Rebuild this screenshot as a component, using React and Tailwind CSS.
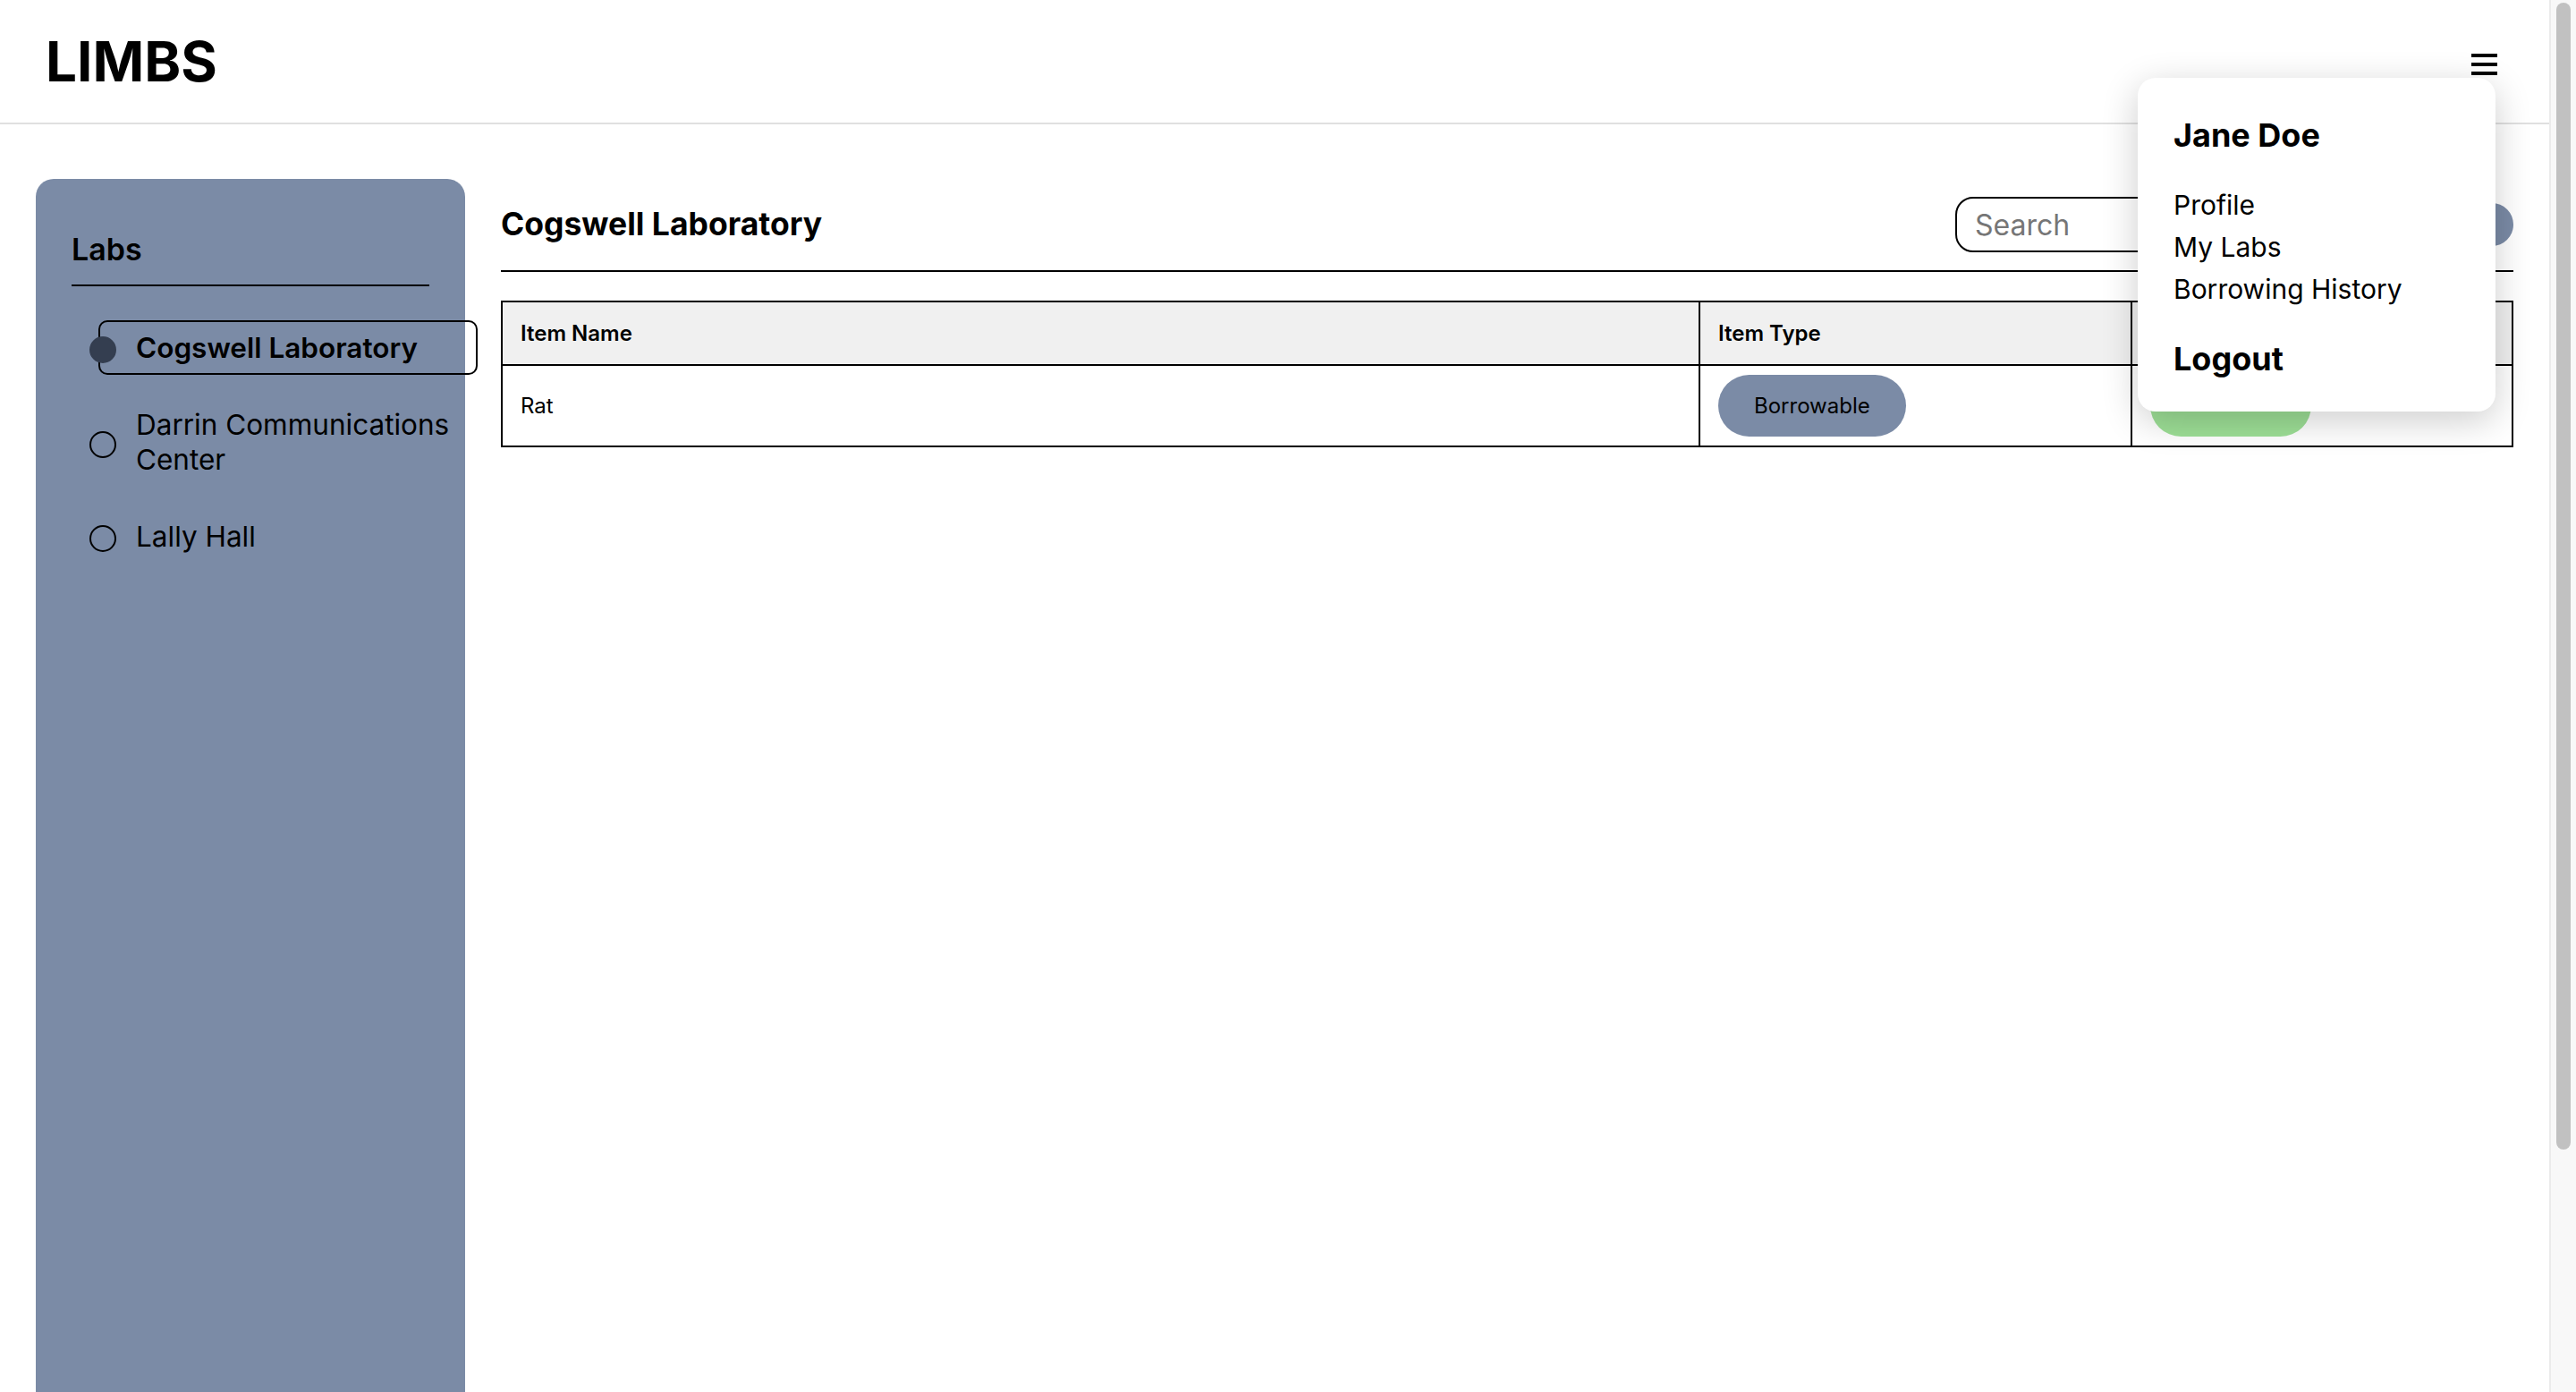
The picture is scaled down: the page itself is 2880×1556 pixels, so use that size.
import React from 'react';

// Labs shown in the sidebar list
const labs = [
  { id: 'cogswell', name: 'Cogswell Laboratory' },
  { id: 'darrin', name: 'Darrin Communications Center' },
  { id: 'lally', name: 'Lally Hall' },
];

const items = [{ id: 1, name: 'Rat', type: 'Borrowable' }];

const menuLinks = ['Profile', 'My Labs', 'Borrowing History'];

const HamburgerIcon = () => (
  <svg width="29" height="24" viewBox="0 0 29 24" fill="currentColor" xmlns="http://www.w3.org/2000/svg">
    <rect x="0" y="0" width="29" height="4" />
    <rect x="0" y="10" width="29" height="4" />
    <rect x="0" y="20" width="29" height="4" />
  </svg>
);

const UserMenu = () => (
  <div className="absolute right-[60px] top-[87px] z-20 w-[400px] rounded-[20px] bg-white pb-[37px] pl-[40px] pt-[42px] shadow-[0_10px_40px_rgba(0,0,0,0.2)]">
    <p className="text-[36px] font-bold leading-[44px]">Jane Doe</p>
    <ul className="mt-[33px] text-[30px] leading-[47px]">
      {menuLinks.map((link) => (
        <li key={link}>
          <a href="#" className="text-black">{link}</a>
        </li>
      ))}
    </ul>
    <button type="button" className="mt-[32px] block text-[36px] font-bold leading-[44px]">
      Logout
    </button>
  </div>
);

const LabList = ({ selected }) => (
  <ul className="mt-[38px] flex flex-col gap-[25px] pl-[20px]">
    {labs.map((lab) => {
      const active = lab.id === selected;
      return (
        <li key={lab.id} className="flex items-center">
          <span
            className={`relative z-10 mt-[5px] h-[30px] w-[30px] shrink-0 rounded-full border-2 ${
              active ? 'border-[#343e50] bg-[#343e50]' : 'border-black'
            }`}
          />
          <span
            className={`-ml-[20px] w-[424px] shrink-0 rounded-[10px] border-2 py-[9px] pl-[40px] pr-[10px] text-[31.5px] leading-[39px] ${
              active ? 'border-black font-semibold' : 'border-transparent'
            }`}
          >
            {lab.name}
          </span>
        </li>
      );
    })}
  </ul>
);

// third column sits under the open user menu, so it carries no label here
const ItemsTable = () => (
  <table className="mt-[32px] w-full table-fixed border-collapse border-2 border-black text-[24px]">
    <colgroup>
      <col className="w-[1339px]" />
      <col className="w-[483px]" />
      <col />
    </colgroup>
    <thead>
      <tr className="bg-[#f0f0f0]">
        <th className="border-2 border-black px-[20px] py-[20px] text-left font-semibold leading-[29px]">Item Name</th>
        <th className="border-2 border-black px-[20px] py-[20px] text-left font-semibold leading-[29px]">Item Type</th>
        <th className="border-2 border-black px-[20px] py-[20px]" />
      </tr>
    </thead>
    <tbody>
      {items.map((item) => (
        <tr key={item.id}>
          <td className="border-2 border-black px-[20px] py-[10px] leading-[29px]">{item.name}</td>
          <td className="border-2 border-black px-[20px] py-[10px]">
            <span className="inline-flex h-[69px] items-center rounded-full bg-[#7b8ba6] px-[40px] leading-[29px]">
              {item.type}
            </span>
          </td>
          <td className="border-2 border-black px-[20px] py-[10px]">
            <button type="button" aria-label="Borrow" className="block h-[69px] w-[180px] rounded-full bg-[#9ddf96]" />
          </td>
        </tr>
      ))}
    </tbody>
  </table>
);

// page scroll track, as the browser shows it on the right
const ScrollTrack = () => (
  <div aria-hidden="true" className="flex w-[30px] shrink-0 justify-center border-l-2 border-[#ebebeb] bg-[#f8f8f8] pt-[3px]">
    <div className="h-[1282px] w-[16px] rounded-full bg-[#c1c1c1]" />
  </div>
);

export default function App() {
  return (
    <div className="flex h-screen overflow-hidden bg-white font-['Inter','Noto_Sans',sans-serif] text-black">
      <div className="min-w-0 flex-1 overflow-y-auto [scrollbar-width:none]">
        <header className="relative flex h-[139px] items-center justify-between border-b-2 border-[#e0e0e0] pl-[51px] pr-[58px]">
          <h1 className="text-[62px] font-bold leading-none">LIMBS</h1>
          <button type="button" className="mt-[7px]" aria-label="Menu">
            <HamburgerIcon />
          </button>
          <UserMenu />
        </header>

        <div className="flex gap-[40px] px-[40px] pb-[40px] pt-[61px]">
          <aside className="h-[1648px] w-[480px] shrink-0 rounded-[20px] bg-[#7b8ba6] px-[40px] pt-[58px]">
            <h2 className="w-[400px] border-b-2 border-black pb-[19px] text-[34px] font-semibold leading-[41px]">Labs</h2>
            <LabList selected="cogswell" />
          </aside>

          <main className="min-w-0 flex-1">
            <div className="flex items-center justify-between border-b-2 border-black pb-[20px] pt-[20px]">
              <h2 className="text-[35.5px] font-bold leading-[44px]">Cogswell Laboratory</h2>
              <div className="flex items-center gap-[20px]">
                <input
                  type="text"
                  placeholder="Search"
                  className="h-[62px] w-[474px] rounded-[20px] border-2 border-black pl-[20px] text-[32px] outline-none placeholder:text-[#767676]"
                />
                <button type="button" aria-label="Search" className="h-[48px] w-[130px] rounded-full bg-[#7b8ba6]" />
              </div>
            </div>
            <ItemsTable />
          </main>
        </div>
      </div>
      <ScrollTrack />
    </div>
  );
}
